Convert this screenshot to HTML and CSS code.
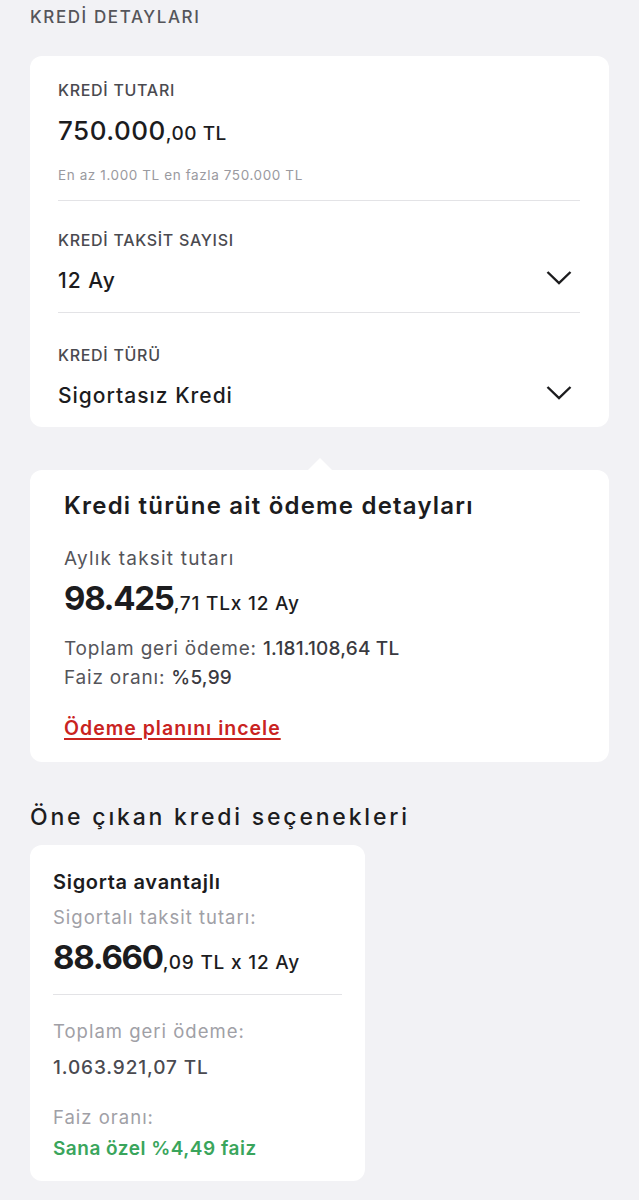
FILE: index.html
```html
<!DOCTYPE html>
<html lang="tr">

<head>
  <meta charset="UTF-8">
  <meta name="viewport" content="width=device-width, initial-scale=1.0">
  <title>Kredi Detayları</title>
  <link rel="stylesheet" href="styles.css">
</head>

<body>
  <h3 class="sectionTitle">KREDİ DETAYLARI</h3>

  <div class="card formCard">
    <div class="field fieldAmount">
      <p class="fieldLabel">KREDİ TUTARI</p>
      <p class="amount">750.000<small>,00 TL</small></p>
      <p class="hint">En az 1.000 TL en fazla 750.000 TL</p>
    </div>

    <div class="field fieldSelect">
      <p class="fieldLabel">KREDİ TAKSİT SAYISI</p>
      <div class="selectRow">
        <span class="value">12 Ay</span>
        <svg class="chevron" width="26" height="15" viewBox="0 0 26 15">
          <path d="M1.5 2 L13 13 L24.5 2" fill="none" stroke="#1c1c1e" stroke-width="2.4" />
        </svg>
      </div>
    </div>

    <div class="field fieldSelect last">
      <p class="fieldLabel">KREDİ TÜRÜ</p>
      <div class="selectRow">
        <span class="value">Sigortasız Kredi</span>
        <svg class="chevron" width="26" height="15" viewBox="0 0 26 15">
          <path d="M1.5 2 L13 13 L24.5 2" fill="none" stroke="#1c1c1e" stroke-width="2.4" />
        </svg>
      </div>
    </div>
  </div>

  <div class="card detailCard">
    <h2 class="detailTitle">Kredi türüne ait ödeme detayları</h2>
    <p class="muted">Aylık taksit tutarı</p>
    <p class="bigAmount">98.425<small>,71 TLx 12 Ay</small></p>
    <p class="infoLine">Toplam geri ödeme: <b>1.181.108,64 TL</b></p>
    <p class="infoLine">Faiz oranı: <b>%5,99</b></p>
    <a class="planLink" href="#">Ödeme planını incele</a>
  </div>

  <h2 class="optionsTitle">Öne çıkan kredi seçenekleri</h2>

  <div class="card offerCard">
    <h4 class="offerTitle">Sigorta avantajlı</h4>
    <p class="lightLabel">Sigortalı taksit tutarı:</p>
    <p class="bigAmount">88.660<small>,09 TL x 12 Ay</small></p>
    <p class="lightLabel gapDivider">Toplam geri ödeme:</p>
    <p class="offerValue">1.063.921,07 TL</p>
    <p class="lightLabel gapTop">Faiz oranı:</p>
    <p class="offerGreen">Sana özel %4,49 faiz</p>
  </div>
</body>

</html>
```

FILE: styles.css
```css
body {
  margin: 0;
  padding: 7px 30px 20px;
  background-color: #f2f2f5;
  font-family: "Inter", "Noto Sans", sans-serif;
  color: #1c1c1e;
}

p {
  margin: 0;
}

.sectionTitle {
  margin: 0 0 29px;
  font-size: 17px;
  line-height: 20px;
  font-weight: 500;
  letter-spacing: 1.6px;
  color: #55555a;
}

.card {
  background-color: #fff;
  border-radius: 12px;
}

/* form card */
.formCard {
  padding: 0 29px 0 28px;
}

.field {
  border-bottom: 1px solid #e3e3e6;
}

.field.last {
  border-bottom: none;
}

.fieldLabel {
  font-size: 16px;
  line-height: 20px;
  font-weight: 500;
  letter-spacing: .7px;
  color: #4a4a50;
}

.fieldAmount {
  padding: 24px 0 16px;
}

.amount {
  margin-top: 15px;
  font-size: 26px;
  line-height: 32px;
  font-weight: 500;
  letter-spacing: .5px;
}

.amount small {
  font-size: 19px;
  line-height: 1;
}

.hint {
  margin-top: 19px;
  font-size: 13.5px;
  line-height: 18px;
  letter-spacing: .6px;
  color: #9a9aa0;
}

.fieldSelect {
  padding: 29px 0 17px;
}

.fieldSelect.last {
  padding: 32px 0 17px;
}

.selectRow {
  display: flex;
  justify-content: space-between;
  align-items: center;
  margin-top: 17px;
}

.value {
  font-size: 21px;
  line-height: 28px;
  font-weight: 500;
  letter-spacing: 1px;
}

.chevron {
  margin-right: 8px;
  margin-top: -7px;
}

/* detail card */
.detailCard {
  position: relative;
  margin-top: 43px;
  padding: 21px 34px 21px;
}

.detailCard::before {
  content: "";
  position: absolute;
  top: -12px;
  left: 278px;
  border-left: 12px solid transparent;
  border-right: 12px solid transparent;
  border-bottom: 12px solid #fff;
}

.detailTitle {
  margin: 0 0 26px;
  font-size: 24px;
  line-height: 30px;
  font-weight: 600;
  letter-spacing: 1.2px;
}

.muted {
  font-size: 19px;
  line-height: 24px;
  letter-spacing: 1.2px;
  color: #55555a;
}

.bigAmount {
  margin-top: 7px;
  font-size: 33px;
  line-height: 40px;
  font-weight: 700;
  letter-spacing: -1.3px;
}

.bigAmount small {
  font-size: 19px;
  line-height: 1;
  font-weight: 500;
  letter-spacing: .8px;
}

.detailCard .bigAmount {
  margin-bottom: 16px;
}

.infoLine {
  font-size: 19px;
  line-height: 29px;
  letter-spacing: .8px;
  color: #55555a;
}

.infoLine b {
  font-weight: 500;
  letter-spacing: .2px;
  color: #3a3a40;
}

.planLink {
  display: inline-block;
  margin-top: 23px;
  font-size: 19.5px;
  line-height: 26px;
  font-weight: 600;
  letter-spacing: 1px;
  color: #c9231f;
  text-decoration: underline;
  text-decoration-thickness: 2px;
  text-underline-offset: 3px;
}

/* options */
.optionsTitle {
  margin: 40px 0 13px;
  font-size: 23px;
  line-height: 30px;
  font-weight: 500;
  letter-spacing: 2.8px;
}

.offerCard {
  width: 289px;
  padding: 24px 23px 19px;
}

.offerTitle {
  margin: 0;
  font-size: 20px;
  line-height: 26px;
  font-weight: 600;
  letter-spacing: .7px;
}

.lightLabel {
  margin-top: 10px;
  font-size: 18.5px;
  line-height: 24px;
  letter-spacing: 1px;
  color: #a0a0a6;
}

.offerCard .bigAmount {
  margin-top: 8px;
  padding-bottom: 17px;
  border-bottom: 1px solid #e3e3e6;
}

.lightLabel.gapDivider {
  margin-top: 24px;
}

.lightLabel.gapTop {
  margin-top: 24px;
}

.offerValue {
  margin-top: 12px;
  font-size: 19px;
  line-height: 26px;
  font-weight: 500;
  letter-spacing: .9px;
  color: #4a4a50;
}

.offerGreen {
  margin-top: 7px;
  font-size: 19px;
  line-height: 26px;
  font-weight: 600;
  letter-spacing: .5px;
  color: #3aa55c;
}
```
